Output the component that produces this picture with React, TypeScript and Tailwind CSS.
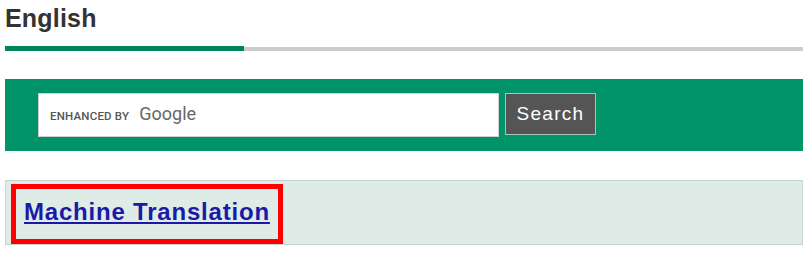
import React from 'react';

export default function App() {
  return (
    <div className="w-[811px] h-[259px] bg-white pl-[5px] pr-[8px] font-['Liberation_Sans',Arial,sans-serif]">
      {/* Heading */}
      <h2 className="pt-[3px] text-[25px] leading-[30px] font-bold tracking-[0.2px] text-[#333333]">English</h2>
      <div className="mt-[13px] flex items-end h-[5px]">
        <div className="w-[239px] h-[5px] bg-[#00845e]" />
        <div className="flex-1 h-[4px] bg-[#cccccc]" />
      </div>

      {/* Search panel */}
      <div className="mt-[28px] h-[72px] bg-[#009468] pl-[33px] pt-[14px] flex items-start">
        <div className="w-[461px] h-[44px] bg-white border border-[#cfcfcf] flex items-center pl-[11px] pb-[4px]">
          <div className="flex items-baseline gap-[10px]">
            <span className="text-[11.5px] font-['Roboto',Arial,sans-serif] font-medium tracking-[0.2px] text-[#555555] uppercase">Enhanced by</span>
            <span className="text-[18px] text-[#666666] font-['Roboto',Arial,sans-serif]">Google</span>
          </div>
        </div>
        <button className="ml-[6px] w-[91px] h-[42px] bg-[#555555] border border-[#a7c4bd] text-white text-[19px] tracking-[1.3px] flex items-center justify-center">
          Search
        </button>
      </div>

      {/* Machine translation box */}
      <div className="mt-[29px] h-[65px] bg-[#dfebe6] border border-[#c5d6d0] pl-[5px] pt-[3px]">
        <div className="w-[272px] h-[60px] border-[5px] border-[#ff0000] pl-[8px] pt-[9px]">
          <a href="#" className="text-[24px] leading-[28px] font-bold text-[#1a1aa6] underline tracking-[0.8px]">
            Machine Translation
          </a>
        </div>
      </div>
    </div>
  );
}
